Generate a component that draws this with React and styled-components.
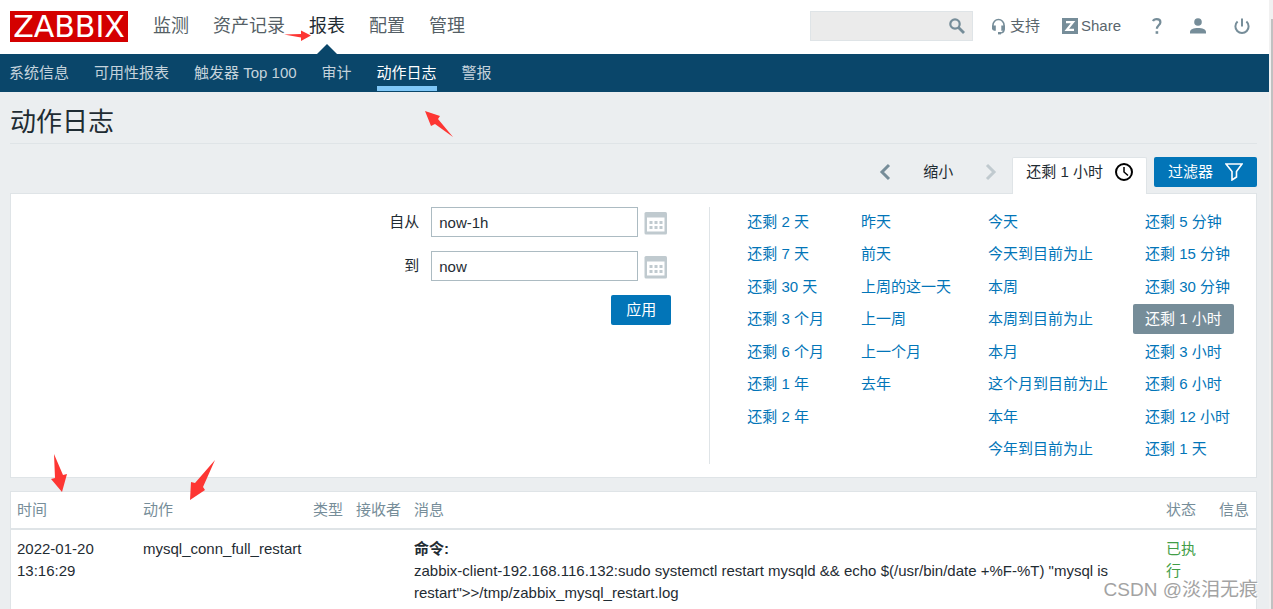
import React, { useState } from "react";
import styled, { createGlobalStyle } from "styled-components";

const mainMenu = ["监测", "资产记录", "报表", "配置", "管理"];
const subMenu = ["系统信息", "可用性报表", "触发器 Top 100", "审计", "动作日志", "警报"];

const presets = [
  ["还剩 2 天", "还剩 7 天", "还剩 30 天", "还剩 3 个月", "还剩 6 个月", "还剩 1 年", "还剩 2 年"],
  ["昨天", "前天", "上周的这一天", "上一周", "上一个月", "去年"],
  ["今天", "今天到目前为止", "本周", "本周到目前为止", "本月", "这个月到目前为止", "本年", "今年到目前为止"],
  ["还剩 5 分钟", "还剩 15 分钟", "还剩 30 分钟", "还剩 1 小时", "还剩 3 小时", "还剩 6 小时", "还剩 12 小时", "还剩 1 天"],
];

const logs = [
  {
    id: 1,
    time: "2022-01-20 13:16:29",
    action: "mysql_conn_full_restart",
    message:
      'zabbix-client-192.168.116.132:sudo systemctl restart mysqld && echo $(/usr/bin/date +%F-%T) "mysql is restart">>/tmp/zabbix_mysql_restart.log',
    status: "已执行",
  },
];

function Header() {
  return (
    <HeaderWrap>
      <Logo href="#">ZABBIX</Logo>
      <MainNav>
        {mainMenu.map((name) => (
          <MainLink key={name} href="#" $active={name === "报表"}>
            {name}
          </MainLink>
        ))}
      </MainNav>
      <SearchBox>
        <input type="text" aria-label="搜索" />
        <button type="button" aria-label="搜索">
          <svg width="18" height="18" viewBox="0 0 18 18" fill="none" stroke="#768d99">
            <circle cx="7" cy="7" r="4.7" strokeWidth="2.2" />
            <path d="M10.5 10.5L16 16" strokeWidth="2.8" />
          </svg>
        </button>
      </SearchBox>
      <UserLinks>
        <a href="#">
          <svg width="16" height="17" viewBox="0 0 16 17" fill="none" stroke="#768d99">
            <path d="M1.900 11V7.500C1.900 4 4.400 1.500 7.500 1.500s5.600 2.500 5.600 6V11c0 2.500-1.500 3.800-3.600 4" strokeWidth="1.600" />
            <path d="M1 7.500h3.800v5.200H3.200Q1 12.500 1 10.500zM10.300 7.500H14v3q0 2-2 2.200h-1.700z" fill="#768d99" stroke="none" />
            <path d="M7 15.200h3" strokeWidth="2.400" />
          </svg>
          支持
        </a>
        <a href="#">
          <svg width="16" height="16" viewBox="0 0 16 16">
            <path d="M0 0h16v16H0z" fill="#768d99" />
            <path d="M4 4.200h7L4.800 11.800H12" fill="none" stroke="#fff" strokeWidth="2.200" />
          </svg>
          Share
        </a>
        <a href="#" aria-label="帮助">
          <svg width="10" height="16" viewBox="0 0 10 16" fill="none" stroke="#768d99" strokeWidth="2.200">
            <path d="M1 3.200C1.600 1.700 3 1.100 4.700 1.100c2.300 0 3.700 1.200 3.700 3.100 0 3-3.500 3.200-3.500 6.600" />
            <path d="M4.900 13.200v2.600" strokeWidth="2.600" />
          </svg>
        </a>
        <a href="#" aria-label="用户">
          <svg width="16" height="16" viewBox="0 0 16 16" fill="#768d99">
            <circle cx="8" cy="4" r="3.800" />
            <path d="M0 15.500v-1.500c0-2.700 3.700-4 8-4s8 1.300 8 4v1.500z" />
          </svg>
        </a>
        <a href="#" aria-label="退出">
          <svg width="16" height="17" viewBox="0 0 16 17" fill="none" stroke="#768d99" strokeWidth="2">
            <path d="M8 0.500v8M3.600 3.500a6.600 6.600 0 1 0 8.800 0" />
          </svg>
        </a>
      </UserLinks>
    </HeaderWrap>
  );
}

function CalendarIcon() {
  return (
    <svg width="24" height="24" viewBox="0 0 24 24">
      <rect x="0.500" y="1" width="22.500" height="22.500" rx="1.500" fill="#c0cacf" />
      <path d="M3 6.500h17.500v14H3z" fill="#fff" />
      <path d="M5.500 11.500h13M5.500 16.500h13" stroke="#c0cacf" strokeWidth="3" strokeDasharray="3 2" />
    </svg>
  );
}

function TimeFilter() {
  const [from, setFrom] = useState("now-1h");
  const [to, setTo] = useState("now");
  const [selected, setSelected] = useState("还剩 1 小时");

  return (
    <FilterWrap>
      <FilterHead>
        <StepButton type="button" aria-label="后退">
          <svg width="12" height="18" viewBox="0 0 12 18" fill="none" stroke="#768d99" strokeWidth="3">
            <path d="M10 2L3 9l7 7" />
          </svg>
        </StepButton>
        <StepButton type="button">缩小</StepButton>
        <StepButton type="button" aria-label="前进">
          <svg width="12" height="18" viewBox="0 0 12 18" fill="none" stroke="#c0cacf" strokeWidth="3">
            <path d="M2 2l7 7-7 7" />
          </svg>
        </StepButton>
        <TimeTab type="button">
          {selected}
          <svg width="18" height="18" viewBox="0 0 18 18" fill="none" stroke="#000" strokeWidth="2">
            <circle cx="9" cy="9" r="8" />
            <path d="M9 4v5l4 3.500" strokeWidth="1.500" />
          </svg>
        </TimeTab>
        <FilterButton type="button">
          过滤器
          <svg width="18" height="18" viewBox="0 0 18 18" fill="none" stroke="#fff" strokeWidth="1.600">
            <path d="M1 1h16l-5.500 7.500V14L7 17V8.500z" />
          </svg>
        </FilterButton>
      </FilterHead>
      <FilterBody>
        <RangeForm onSubmit={(e) => e.preventDefault()}>
          <RangeRow>
            <label htmlFor="from">自从</label>
            <input id="from" value={from} onChange={(e) => setFrom(e.target.value)} />
            <button type="button" aria-label="选择开始时间">
              <CalendarIcon />
            </button>
          </RangeRow>
          <RangeRow>
            <label htmlFor="to">到</label>
            <input id="to" value={to} onChange={(e) => setTo(e.target.value)} />
            <button type="button" aria-label="选择结束时间">
              <CalendarIcon />
            </button>
          </RangeRow>
          <ApplyButton type="submit">应用</ApplyButton>
        </RangeForm>
        <Presets>
          {presets.map((column) => (
            <PresetColumn key={column[0]}>
              {column.map((name) => (
                <PresetLink
                  key={name}
                  href="#"
                  $selected={name === selected}
                  onClick={() => setSelected(name)}
                >
                  {name}
                </PresetLink>
              ))}
            </PresetColumn>
          ))}
        </Presets>
      </FilterBody>
    </FilterWrap>
  );
}

function LogTable() {
  return (
    <TableWrap>
      <table>
        <colgroup>
          <col width="126" />
          <col width="170" />
          <col width="43" />
          <col width="58" />
          <col />
          <col width="53" />
          <col width="43" />
        </colgroup>
        <thead>
          <tr>
            <th>时间</th>
            <th>动作</th>
            <th>类型</th>
            <th>接收者</th>
            <th>消息</th>
            <th>状态</th>
            <th>信息</th>
          </tr>
        </thead>
        <tbody>
          {logs.map((log) => (
            <tr key={log.id}>
              <td>{log.time}</td>
              <td>{log.action}</td>
              <td />
              <td />
              <td>
                <b>命令:</b>
                <br />
                {log.message}
              </td>
              <td>
                <Status>{log.status}</Status>
              </td>
              <td />
            </tr>
          ))}
        </tbody>
      </table>
    </TableWrap>
  );
}

function App() {
  return (
    <Shell>
      <GlobalStyle />
      <Page>
        <Header />
        <SubNav>
          {subMenu.map((name) => (
            <SubLink key={name} href="#" $active={name === "动作日志"}>
              {name}
            </SubLink>
          ))}
        </SubNav>
        <Content>
          <Title>动作日志</Title>
          <TimeFilter />
          <LogTable />
        </Content>
      </Page>
      <ScrollTrack>
        <div />
      </ScrollTrack>
      <Mark $x={284} $y={29} width="28" height="13" viewBox="0 0 28 13">
        <path d="M0 5.500l17-.5V1.500l10 5-10 5.500V8.500z" />
      </Mark>
      <Mark $x={425} $y={111} width="28" height="27" viewBox="0 0 28 27">
        <path d="M0 0l15 5-2 3 15 18L10 13l-4 2z" />
      </Mark>
      <Mark $x={51} $y={454} width="17" height="38" viewBox="0 0 17 38">
        <path d="M3 0l9 21 4-1-5 18L0 25l4-1z" />
      </Mark>
      <Mark $x={190} $y={460} width="25" height="41" viewBox="0 0 25 41">
        <path d="M25 0L13 27l2 3-15 10 1-18 4 1z" />
      </Mark>
      <Watermark>CSDN @淡泪无痕</Watermark>
    </Shell>
  );
}

export default App;

const GlobalStyle = createGlobalStyle`
  * {
    box-sizing: border-box;
  }
  body {
    margin: 0;
    background: #ebeef0;
    color: #1f2c33;
    overflow: hidden;
  }
  body, input, button {
    font-family: "Liberation Sans", "Noto Sans CJK SC", sans-serif;
    font-size: 15px;
    line-height: 22px;
  }
  a {
    text-decoration: none;
  }
  button {
    border: 0;
    padding: 0;
    background: none;
    color: inherit;
    cursor: pointer;
  }
  svg {
    display: block;
    flex: none;
  }
`;

const Shell = styled.div`
  position: relative;
  display: flex;
  height: 100vh;
  overflow: hidden;
`;

const Page = styled.div`
  flex: 1;
  min-width: 0;
`;

const ScrollTrack = styled.div`
  width: 4px;
  padding: 19px 0 0 2px;
  background: #f1f1f1;
  div {
    height: 100%;
    background: #c1c1c1;
  }
`;

const HeaderWrap = styled.header`
  display: flex;
  align-items: center;
  height: 54px;
  padding: 0 19px 2px 10px;
  background: #fff;
`;

const Logo = styled.a`
  width: 118px;
  height: 31px;
  background: #d40000;
  color: #fff;
  font-family: "DejaVu Sans", sans-serif;
  font-size: 30px;
  line-height: 31px;
  text-align: center;
`;

const MainNav = styled.nav`
  display: flex;
  gap: 24px;
  margin-left: 25px;
`;

const MainLink = styled.a`
  position: relative;
  color: ${({ $active }) => ($active ? "#1f2c33" : "#555f66")};
  font-size: 18px;
  line-height: 52px;
  &::after {
    content: "";
    display: ${({ $active }) => ($active ? "block" : "none")};
    position: absolute;
    left: 50%;
    bottom: -2px;
    margin-left: -10px;
    border: 10px solid transparent;
    border-top: 0;
    border-bottom-color: #0a466a;
  }
`;

const SearchBox = styled.div`
  display: flex;
  align-items: center;
  width: 163px;
  height: 30px;
  margin-left: auto;
  padding-right: 6px;
  border: 1px solid #dfe4e7;
  background: #ebebeb;
  input {
    flex: 1;
    min-width: 0;
    border: 0;
    background: none;
    outline: none;
  }
`;

const UserLinks = styled.div`
  display: flex;
  align-items: center;
  margin-left: 18px;
  a {
    display: flex;
    align-items: center;
    gap: 3px;
    color: #5a666d;
  }
  a + a {
    margin-left: 22px;
  }
  a:nth-child(n + 3) {
    margin-left: 28px;
  }
  a:nth-child(3) {
    margin-left: 31px;
  }
`;

const SubNav = styled.nav`
  display: flex;
  gap: 25px;
  height: 38px;
  padding: 0 9px;
  background: #0a466a;
`;

const SubLink = styled.a`
  height: 37px;
  border-bottom: 5px solid ${({ $active }) => ($active ? "#7fc7f7" : "transparent")};
  color: ${({ $active }) => ($active ? "#fff" : "#c5d3dc")};
  line-height: 38px;
`;

const Content = styled.main`
  padding: 0 12px 0 10px;
`;

const Title = styled.h1`
  height: 52px;
  margin: 0 0 13px;
  border-bottom: 1px solid #dfe4e7;
  font-size: 26px;
  font-weight: 400;
  line-height: 60px;
`;

const FilterWrap = styled.section`
  margin-bottom: 13px;
`;

const FilterHead = styled.div`
  display: flex;
  justify-content: flex-end;
  align-items: flex-start;
`;

const StepButton = styled.button`
  display: flex;
  align-items: center;
  height: 30px;
  margin-right: 32px;
  &:nth-child(3) {
    margin-right: 15px;
  }
`;

const TimeTab = styled.button`
  position: relative;
  display: flex;
  align-items: center;
  gap: 12px;
  height: 37px;
  margin-bottom: -1px;
  padding: 0 13px 8px;
  border: 1px solid #dfe4e7;
  border-bottom: 0;
  border-radius: 2px 2px 0 0;
  background: #fff;
`;

const FilterButton = styled.button`
  display: flex;
  align-items: center;
  gap: 12px;
  height: 30px;
  margin-left: 7px;
  padding: 0 14px;
  border-radius: 2px;
  background: #0275b8;
  color: #fff;
`;

const FilterBody = styled.div`
  display: flex;
  padding: 13px 14px 13px 0;
  border: 1px solid #dfe4e7;
  background: #fff;
`;

const RangeForm = styled.form`
  display: flex;
  flex: 1;
  flex-direction: column;
  align-items: flex-end;
  gap: 14px;
  padding-right: 38px;
`;

const RangeRow = styled.div`
  display: flex;
  align-items: center;
  label {
    margin-right: 12px;
  }
  input {
    width: 207px;
    height: 30px;
    padding: 0 7px;
    border: 1px solid #acbbc2;
    color: #1f2c33;
  }
  button {
    margin: 1px 3px 0 6px;
  }
`;

const ApplyButton = styled.button`
  width: 60px;
  height: 30px;
  border-radius: 2px;
  background: #0275b8;
  color: #fff;
`;

const Presets = styled.div`
  display: flex;
  gap: 13px;
  min-height: 257px;
  padding-left: 25px;
  border-left: 1px solid #dfe4e7;
`;

const PresetColumn = styled.div`
  display: grid;
  grid-template-rows: repeat(8, 30px);
  align-content: space-between;
  justify-items: start;
`;

const PresetLink = styled.a`
  padding: 0 12px;
  border-radius: 2px;
  background: ${({ $selected }) => ($selected ? "#768d99" : "none")};
  color: ${({ $selected }) => ($selected ? "#fff" : "#0275b8")};
  line-height: 30px;
`;

const TableWrap = styled.section`
  border: 1px solid #dfe4e7;
  background: #fff;
  table {
    width: 100%;
    table-layout: fixed;
    border-collapse: collapse;
  }
  th,
  td {
    padding: 8px 6px;
    text-align: left;
    vertical-align: top;
  }
  th {
    padding: 7px 6px;
    border-bottom: 2px solid #dfe4e7;
    color: #768d99;
    font-weight: 400;
    white-space: nowrap;
  }
  td {
    height: 120px;
  }
`;

const Status = styled.span`
  color: #429e47;
`;

const Mark = styled.svg`
  position: absolute;
  left: ${({ $x }) => $x}px;
  top: ${({ $y }) => $y}px;
  fill: #fd3633;
`;

const Watermark = styled.div`
  position: absolute;
  right: 15px;
  bottom: 4px;
  color: #a3a3a3;
  font-size: 19px;
  line-height: 30px;
  text-shadow: 1px 1px 0 #fff;
`;
